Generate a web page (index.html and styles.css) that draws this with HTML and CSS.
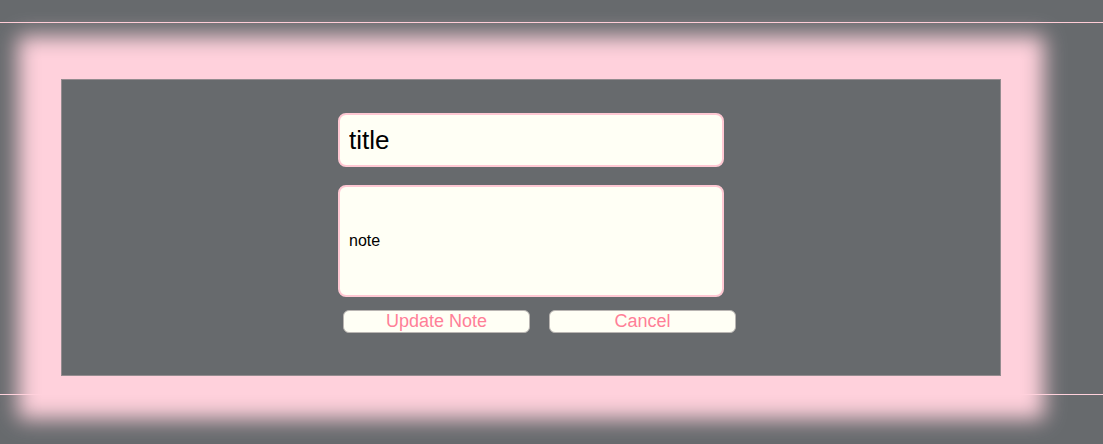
FILE: index.html
```
<!DOCTYPE html>
<html>
<head>
<meta charset="utf-8">
<link rel="stylesheet" href="styles.css">
</head>
<body>
<header class="top"></header>
<main class="stage">
  <form class="note-form">
    <input class="title-input" type="text" value="title">
    <input class="note-input" type="text" value="note">
    <div class="actions">
      <button type="button" class="btn">Update Note</button>
      <button type="button" class="btn">Cancel</button>
    </div>
  </form>
</main>
<footer class="bottom"></footer>
</body>
</html>
```
FILE: styles.css
```
html {
  background: #676a6d;
}
body {
  margin: 0;
  padding: 0;
  height: 444px;
  overflow: hidden;
  font-family: "Liberation Sans", Arial, sans-serif;
}
.top {
  height: 22px;
  border-bottom: 1px solid #ffcdd7;
}
.stage {
  position: relative;
  z-index: 2;
  margin: 56px 0 0 61px;
  width: 940px;
  height: 297px;
  box-sizing: border-box;
  background: #676a6d;
  border: 1px solid #948c8f;
  box-shadow: 0 0 20px 43px #ffd1dc;
  display: flex;
  justify-content: center;
}
.note-form {
  width: 386px;
  padding-top: 33px;
  display: flex;
  flex-direction: column;
}
.title-input, .note-input {
  box-sizing: border-box;
  width: 386px;
  border: 2px solid #ffc8d3;
  border-radius: 8px;
  background: #fffff5;
  color: #000;
  font-family: "Liberation Sans", Arial, sans-serif;
  padding: 0 9px;
  outline: none;
}
.title-input {
  height: 54px;
  font-size: 26px;
}
.note-input {
  height: 112px;
  margin-top: 18px;
  font-size: 16px;
}
.actions {
  display: flex;
  gap: 19px;
  padding-left: 5px;
  margin-top: 13px;
}
.btn {
  flex: none;
  width: 187px;
  height: 23px;
  box-sizing: border-box;
  background: #fffff5;
  border: 1px solid #b9b5b2;
  border-radius: 6px;
  color: #ff7f98;
  font-family: "Liberation Sans", Arial, sans-serif;
  font-size: 18px;
  padding: 0;
  line-height: 21px;
}
.bottom {
  position: relative;
  z-index: 1;
  margin-top: 18px;
  border-top: 1px solid #ffd1dc;
}
```
